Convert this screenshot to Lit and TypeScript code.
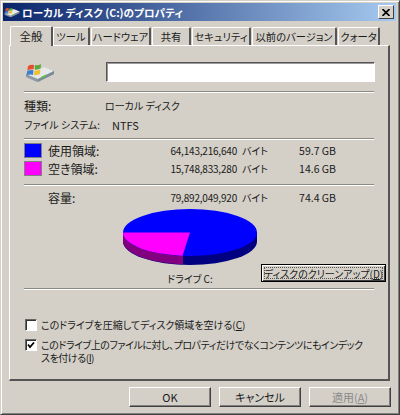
import { LitElement, html, css, svg } from "lit";
import { customElement } from "lit/decorators.js";

const driveIcon = (w: number, h: number) => html`<svg width=${w} height=${h} viewBox="0 0 30 20">
  <path d="M1 15 L12 20 L29 12 L29 9 L17 5 L1 12 Z" fill="#8f9aa6"/>
  <path d="M1 12 L13 17 L29 9 L19 5 L8 7 Z" fill="#e6e8ea"/>
  <path d="M13 17 L29 9 L29 12 L13 20 Z" fill="#7c8c96"/>
  <path d="M16 15 l5 -2.4 v1.6 l-5 2.4 Z" fill="#5cc04a"/>
  <path d="M3 4 Q6 2 9 3 L8.6 7.4 Q6 6.6 2.4 8.4 Z" fill="#e2502c"/>
  <path d="M10 3 Q13 4 16 2 L15.6 6.6 Q12.5 8.2 9.6 7.4 Z" fill="#5ca83c"/>
  <path d="M2.2 9 Q6 7.4 8.5 8.2 L8 13 Q5 12 1.5 13.6 Z" fill="#3f7fd0"/>
  <path d="M9.4 8.2 Q12.5 9 15.4 7.4 L15 12 Q12 13.6 9 13 Z" fill="#efc030"/>
</svg>`;

const pie = svg`
  <path d="M1 24.5 V33.5 A67 23.5 0 0 0 135 33.5 V24.5 Z" fill="#000080"/>
  <path d="M1 24.5 V33.5 A67 23.5 0 0 0 61 56.5 V47 Z" fill="#800080"/>
  <ellipse cx="68" cy="24.5" rx="67" ry="23.5" fill="#0000ff"/>
  <path d="M68 24.5 L1 24.5 A67 23.5 0 0 0 60.5 47.8 Z" fill="#ff00ff"/>
`;

@customElement("app-root")
export class AppRoot extends LitElement {
  static styles = css`
    :host {
      display: block;
      width: 400px;
      height: 415px;
      font-family: "Noto Sans CJK JP", "Liberation Sans", sans-serif;
      font-size: 11px;
      font-feature-settings: "palt";
      color: #1a1a1a;
    }
    * { box-sizing: border-box; }
    .window {
      width: 400px;
      height: 415px;
      background: #d4d0c8;
      border: 1px solid #404040;
      border-top-color: #d4d0c8;
      border-left-color: #d4d0c8;
      box-shadow: inset 1px 1px 0 #fff, inset -1px -1px 0 #808080;
      padding: 2px;
      display: flex;
      flex-direction: column;
    }
    .title {
      height: 18px;
      margin: 0 1px 0 0;
      background: linear-gradient(90deg, #0a246a, #a6caf0);
      display: flex;
      align-items: center;
      gap: 2px;
      padding: 0 2px 0 1px;
      color: #fff;
      font-weight: 700;
      font-size: 10.6px;
    }
    .title span { flex: 1; white-space: pre; }
    .close {
      width: 16px;
      height: 14px;
      background: #d4d0c8;
      border: 1px solid;
      border-color: #fff #404040 #404040 #fff;
      display: grid;
      place-items: center;
    }
    .tabs {
      display: flex;
      height: 21px;
      margin-top: 3px;
      padding: 2px 0 0 9px;
      align-items: flex-end;
      font-size: 10.3px;
    }
    .tab {
      height: 18px;
      border: 1px solid #fff;
      border-right: 2px solid #555;
      border-bottom: 0;
      border-radius: 2px 2px 0 0;
      display: flex;
      align-items: center;
      justify-content: center;
      white-space: nowrap;
      margin-right: 1px;
    }
    .tab.on {
      height: 20px;
      margin: 0 0 -1px -2px;
      padding-bottom: 2px;
      position: relative;
      z-index: 1;
      background: #d4d0c8;
      font-size: 11.5px;
    }
    .panel {
      width: 381px;
      height: 336px;
      margin-left: 6px;
      border: 1px solid;
      border-color: #fff #555 #555 #fff;
      border-right-width: 2px;
      border-bottom-width: 2px;
      padding: 16px 14px 0 14px;
      display: flex;
      flex-direction: column;
    }
    .head {
      display: grid;
      grid-template-columns: 82px 269px;
      align-items: center;
      height: 20px;
    }
    .head svg { display: block; margin-left: 1px; }
    .name {
      height: 20px;
      background: #fff;
      border: 1px solid;
      border-color: #555 #fff #fff #555;
      box-shadow: inset 1px 1px 0 #999;
    }
    .sep {
      height: 2px;
      width: 350px;
      background: #8a8a85;
      border-bottom: 1px solid #fff;
      flex: none;
    }
    .kv {
      display: grid;
      grid-template-columns: 81px 1fr;
      align-items: center;
      height: 19px;
      white-space: pre;
      font-size: 10px;
    }
    .kv.fs { grid-template-columns: 88px 1fr; }
    .big { font-size: 12px; }
    .fsv { font-size: 11px; }
    .usage {
      display: grid;
      grid-template-columns: 24px 110px 79px 30px 31px 38px;
      align-items: center;
      height: 18px;
      white-space: nowrap;
    }
    .swatch {
      width: 18px;
      height: 15px;
      border: 1px solid #808080;
    }
    .num { text-align: right; font-size: 10px; letter-spacing: -0.2px; }
    .unit { padding-left: 5px; font-size: 10px; }
    .gb { grid-column: 6; text-align: right; font-size: 10.5px; }
    .chart {
      display: flex;
      height: 82px;
    }
    .pie-col {
      flex: none;
      width: 237px;
      padding: 2px 0 0 98px;
    }
    .pie-col svg { display: block; }
    .drive {
      width: 136px;
      margin-top: 6px;
      line-height: 14px;
      text-align: center;
      white-space: pre;
      font-size: 10px;
    }
    .cleanup {
      flex: none;
      align-self: flex-end;
      width: 125px;
      height: 18px;
      margin-bottom: 6px;
      border: 1px solid #000;
      box-shadow: inset 1px 1px 0 #fff, inset -1px -1px 0 #404040;
      outline: 1px dotted #555;
      outline-offset: -4px;
      display: flex;
      align-items: center;
      justify-content: center;
      white-space: nowrap;
      font-size: 10px;
    }
    .checks {
      display: flex;
      flex-direction: column;
      gap: 7px;
      margin-top: 28px;
    }
    .check {
      display: grid;
      grid-template-columns: 16px 335px;
      margin-left: 1px;
      line-height: 13px;
      font-size: 10px;
      white-space: nowrap;
    }
    .tight { letter-spacing: -0.45px; }
    .box {
      width: 12px;
      height: 12px;
      background: #fff;
      border: 1px solid;
      border-color: #666 #fff #fff #666;
      box-shadow: inset 1px 1px 0 #333;
      display: grid;
      place-items: center;
      margin-top: 1px;
    }
    .u { text-decoration: underline; }
    .actions {
      display: flex;
      justify-content: flex-end;
      gap: 8px;
      margin-top: 6px;
      padding-right: 6px;
    }
    .btn {
      width: 82px;
      height: 20px;
      border: 1px solid;
      border-color: #fff #404040 #404040 #fff;
      box-shadow: inset -1px -1px 0 #808080;
      display: flex;
      align-items: center;
      justify-content: center;
    }
    .btn.off { color: #8a8a8a; }
  `;

  render() {
    const tabs: [string, number][] = [
      ["ツール", 37], ["ハードウェア", 60], ["共有", 39],
      ["セキュリティ", 59], ["以前のバージョン", 85], ["クォータ", 42],
    ];
    return html`<div class="window">
      <div class="title">
        ${driveIcon(16, 12)}
        <span>ローカル ディスク (C:)のプロパティ</span>
        <div class="close"><svg width="8" height="7" viewBox="0 0 8 7"><path d="M0.5 0 L7.5 7 M7.5 0 L0.5 7" stroke="#000" stroke-width="1.6"/></svg></div>
      </div>
      <div class="tabs">
        <div class="tab on" style="width:43px">全般</div>
        ${tabs.map(([t, w]) => html`<div class="tab" style="width:${w}px">${t}</div>`)}
      </div>
      <div class="panel">
        <div class="head">
          ${driveIcon(30, 20)}
          <div class="name"></div>
        </div>
        <div class="sep" style="margin-top:9px"></div>
        <div class="kv" style="margin-top:3px"><span class="big">種類:</span><span>ローカル ディスク</span></div>
        <div class="kv fs"><span>ファイル システム:</span><span class="fsv">NTFS</span></div>
        <div class="sep" style="margin-top:4px"></div>
        <div class="usage" style="margin-top:1px">
          <div class="swatch" style="background:#0000ff"></div><span class="big">使用領域:</span>
          <span class="num">64,143,216,640</span><span class="unit">バイト</span><span class="gb">59.7 GB</span>
        </div>
        <div class="usage">
          <div class="swatch" style="background:#ff00ff"></div><span class="big">空き領域:</span>
          <span class="num">15,748,833,280</span><span class="unit">バイト</span><span class="gb">14.6 GB</span>
        </div>
        <div class="sep" style="margin-top:7px"></div>
        <div class="usage" style="margin-top:2px">
          <span></span><span class="big">容量:</span>
          <span class="num">79,892,049,920</span><span class="unit">バイト</span><span class="gb">74.4 GB</span>
        </div>
        <div class="chart">
          <div class="pie-col">
            <svg width="136" height="58" viewBox="0 0 136 58">${pie}</svg>
            <div class="drive">ドライブ C:</div>
          </div>
          <div class="cleanup">ディスクのクリーンアップ(<span class="u">D</span>)</div>
        </div>
        <div class="sep"></div>
        <div class="checks">
          <div class="check"><div class="box"></div><div>このドライブを圧縮してディスク領域を空ける(<span class="u">C</span>)</div></div>
          <div class="check"><div class="box"><svg width="8" height="8" viewBox="0 0 8 8"><path d="M1 3.5 L3 6 L7 1.5" fill="none" stroke="#000" stroke-width="1.8"/></svg></div><div class="tight">このドライブ上のファイルに対し、プロパティだけでなくコンテンツにもインデック<br>スを付ける(<span class="u">I</span>)</div></div>
        </div>
      </div>
      <div class="actions">
        <div class="btn">OK</div>
        <div class="btn">キャンセル</div>
        <div class="btn off">適用(<span class="u">A</span>)</div>
      </div>
    </div>`;
  }
}
